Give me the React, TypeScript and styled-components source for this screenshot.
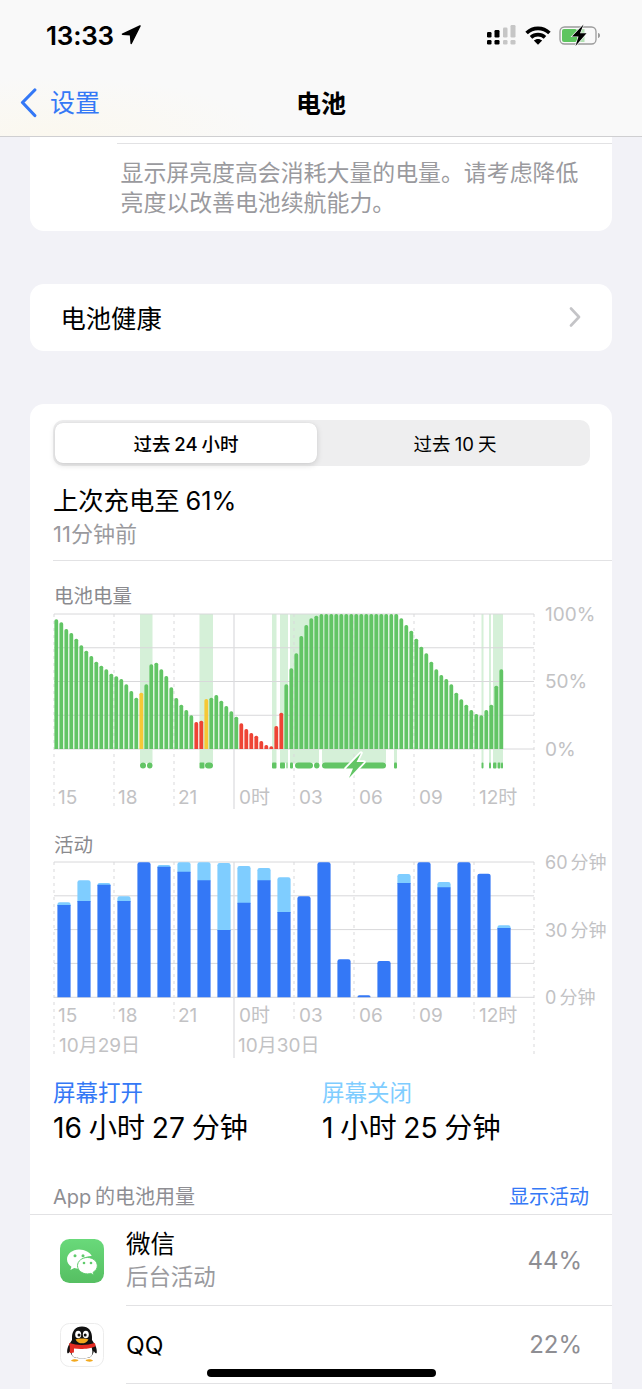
import React from "react";
import styled, { createGlobalStyle } from "styled-components";

const FONT = `Inter, "Noto Sans CJK SC", sans-serif`;

const Global = createGlobalStyle`
  html, body { margin: 0; padding: 0; background: #f2f2f7; }
  body { font-family: ${FONT}; -webkit-font-smoothing: antialiased; }
`;

const Page = styled.div`
  position: relative;
  width: 642px;
  height: 1389px;
  overflow: hidden;
  background: #f2f2f7;
`;
const Header = styled.header`
  height: 136px;
  border-bottom: 1px solid #cfcfd1;
  background: radial-gradient(220px 60px at 50px 136px, #fbf8ef, transparent), #f9f9f9;
`;
const StatusBar = styled.div`
  height: 70px;
  padding: 0 41px 0 46px;
  display: flex;
  align-items: center;
  justify-content: space-between;
`;
const Clock = styled.div`
  display: flex;
  align-items: center;
  gap: 7px;
  font-size: 26px;
  font-weight: 600;
  color: #000;
  letter-spacing: -0.2px;
`;
const StatusIcons = styled.div`
  display: flex;
  align-items: center;
  gap: 8px;
`;
const NavBar = styled.nav`
  position: relative;
  height: 66px;
  display: flex;
  align-items: center;
  justify-content: center;
`;
const BackLink = styled.div`
  position: absolute;
  left: 20px;
  top: 18px;
  display: flex;
  align-items: center;
  gap: 13px;
  font-size: 25px;
  line-height: 30px;
  color: #3478f6;
`;
const NavTitle = styled.div`
  margin-top: -2px;
  font-size: 25px;
  font-weight: 600;
  color: #000;
`;
const Card = styled.section<{ $mt?: number }>`
  display: flow-root;
  margin: ${(p) => p.$mt ?? 0}px 30px 0;
  background: #fff;
  border-radius: 14px;
`;
const TopCard = styled(Card)`
  height: 94px;
  border-radius: 0 0 14px 14px;
  padding-top: 6px;
  box-sizing: border-box;
`;
const NoteRule = styled.div`
  height: 1px;
  margin-left: 87px;
  background: #e2e2e4;
`;
const Note = styled.p`
  margin: 14px 24px 0 90.5px;
  font-size: 22.9px;
  line-height: 30px;
  color: #9a9a9e;
`;
const LinkRow = styled(Card)`
  height: 67px;
  padding: 0 31px 2px 30.5px;
  box-sizing: border-box;
  display: flex;
  align-items: center;
  justify-content: space-between;
  font-size: 25.3px;
  color: #000;
`;
const Segmented = styled.div`
  margin: 16px 22px 0 23px;
  height: 46px;
  box-sizing: border-box;
  padding: 3px 3px 3px 2px;
  display: flex;
  background: #eeeeef;
  border-radius: 10px;
`;
const Segment = styled.div<{ $on?: boolean }>`
  flex: ${(p) => (p.$on ? "0 0 262px" : "1")};
  padding-left: ${(p) => (p.$on ? 0 : 6)}px;
  display: flex;
  align-items: center;
  justify-content: center;
  border-radius: 8px;
  font-size: 18.5px;
  color: #000;
  word-spacing: -1px;
  font-weight: ${(p) => (p.$on ? 500 : 400)};
  background: ${(p) => (p.$on ? "#fff" : "transparent")};
  box-shadow: ${(p) => (p.$on ? "0 2px 6px rgba(0,0,0,.14), 0 0 1px rgba(0,0,0,.1)" : "none")};
`;
const Summary = styled.div`
  margin: 17px 0 0 23px;
  padding-bottom: 11px;
  border-bottom: 1px solid #e2e2e4;
`;
const SummaryTitle = styled.div`
  font-size: 25.3px;
  line-height: 36px;
  color: #000;
  word-spacing: -1px;
`;
const SummarySub = styled.div`
  font-size: 22px;
  line-height: 30px;
  color: #9a9a9e;
`;
const ChartTitle = styled.div<{ $mt: number }>`
  margin: ${(p) => p.$mt}px 0 0 24px;
  font-size: 19.5px;
  line-height: 24px;
  color: #8a8a8e;
`;
const ChartSvg = styled.svg`
  display: block;
  width: 582px;
  height: 205px;
  overflow: visible;
`;
const AxisText = styled.text<{ $small?: boolean }>`
  font-family: ${FONT};
  font-size: ${(p) => (p.$small ? 18 : 19)}px;
  fill: #c2c2c4;
  word-spacing: -2px;
`;
const Stats = styled.div`
  margin: 17px 23px 0;
  display: grid;
  grid-template-columns: 269px 1fr;
`;
const StatLabel = styled.div<{ $light?: boolean }>`
  font-size: 22.5px;
  line-height: 28px;
  color: ${(p) => (p.$light ? "#7fcdff" : "#3478f6")};
`;
const StatValue = styled.div`
  margin-top: 2px;
  font-size: 28.2px;
  line-height: 38px;
  color: #000;
  word-spacing: -1.2px;
`;
const UsageHead = styled.div`
  margin: 34px 23px 0;
  height: 28px;
  display: flex;
  align-items: center;
  justify-content: space-between;
  font-size: 20px;
  color: #8e8e93;
  word-spacing: -2px;
`;
const UsageLink = styled.span`
  color: #3478f6;
`;
const AppList = styled.div`
  margin-top: 5px;
  padding-bottom: 20px;
  border-top: 1px solid #e2e2e4;
`;
const AppRow = styled.div<{ $h: number }>`
  height: ${(p) => p.$h}px;
  display: flex;
  align-items: center;
  padding-left: 30px;
`;
const AppIcon = styled.svg`
  display: block;
  width: 44px;
  height: 44px;
  flex: none;
`;
const AppBody = styled.div`
  align-self: stretch;
  flex: 1;
  margin-left: 22px;
  padding-right: 30px;
  display: flex;
  align-items: center;
  justify-content: space-between;
  border-bottom: 1px solid #e2e2e4;
  box-sizing: border-box;
`;
const AppName = styled.div`
  font-size: 24.5px;
  line-height: 32px;
  color: #000;
`;
const AppSub = styled.div`
  font-size: 22.4px;
  line-height: 30px;
  margin-top: 2px;
  color: #9a9a9e;
`;
const AppPct = styled.div`
  font-size: 24px;
  color: #8e8e93;
`;
const HomeBar = styled.div`
  position: absolute;
  left: 207px;
  top: 1369px;
  width: 229px;
  height: 8px;
  border-radius: 4px;
  background: #000;
`;

const G = "#62c565", R = "#ee4435", Y = "#f6c836";
const batteryTops = [118,127,147,159,176,196,212,228,245,257,268,281,289,297,313,333,353,338,313,253,248,268,288,322,354,374,390,406,426,422,357,353,345,362,378,394,410,430,447,459,467,483,495,499,438,398,313,265,220,168,135,115,107,102,102,102,102,102,102,102,102,102,102,102,102,102,102,102,102,115,135,152,176,200,220,245,268,285,297,313,338,358,374,390,402,406,390,374,317,268];
const reds = new Set([28,29,37,38,39,40,41,42,43,44,45]);
const yellows = new Set([17,30]);
const regions: [number, number][] = [[140,152.5],[199.5,213],[272,276.5],[280,288],[290,319],[322,386],[394,397],[481.5,483.5],[489,491],[493,503]];
const strips: [number, number][] = [[140,146],[147,152.5],[199.5,204.5],[205,213],[272,276.5],[280,285],[286.5,287.5],[290,293],[295,313],[314,319.5],[322,386],[394,397],[481.5,483.5],[489,491],[493,496.5],[497.5,500.5],[501,503]];
const activity: [number, number][] = [[232,240],[166,228],[174,179],[214,228],[112,112],[120,125],[112,140],[112,166],[114,315],[123,233],[129,166],[157,261],[214,214],[112,112],[403,403],[511,511],[408,408],[147,174],[112,112],[171,187],[112,112],[146,146],[301,309]];
const ticks = [54,114,174,234,294,354,414,474,534];
const hourLabels: [number, string][] = [[58,"15"],[118,"18"],[178,"21"],[239,"0时"],[299,"03"],[359,"06"],[419,"09"],[479,"12时"]];

const topBar = (cx: number, w: number, top: number, bottom: number, r: number) => {
  const l = cx - w / 2, rr = cx + w / 2, rad = Math.min(r, Math.max(0, bottom - top));
  return `M${l} ${bottom}V${top + rad}Q${l} ${top} ${l + rad} ${top}H${rr - rad}Q${rr} ${top} ${rr} ${top + rad}V${bottom}Z`;
};

function Ticks({ top, bottom, extended }: { top: number; bottom: number; extended?: number }) {
  return (
    <>
      {ticks.map((x) =>
        x === 234 ? (
          <line key={x} x1={x} x2={x} y1={top} y2={(extended ?? bottom) + 3} stroke="#dedee0" strokeWidth={1.3} />
        ) : (
          <line key={x} x1={x} x2={x} y1={top} y2={extended && (x === 54 || x === 534) ? extended : bottom} stroke="#d9d9db" strokeWidth={1} strokeDasharray="3 4" />
        )
      )}
    </>
  );
}

function BatteryChart() {
  const toY = (z: number) => 580 + z / 3;
  return (
    <ChartSvg viewBox="30 608 582 205">
      {regions.map(([a, b]) => <rect key={a} x={a} y={614} width={b - a} height={149} fill="#d5f0d8" />)}
      {[614, 647.75, 681.5, 715.25, 749].map((y) => (
        <line key={y} x1={54} x2={534} y1={y} y2={y} stroke="#d8d8da" strokeWidth={1} />
      ))}
      <Ticks top={614} bottom={806} />
      {batteryTops.map((z, i) => (
        <path key={i} d={topBar(56.3 + 5 * i, 3.8, toY(z), 749, 1.7)} fill={reds.has(i) ? R : yellows.has(i) ? Y : G} />
      ))}
      {strips.map(([a, b]) => <rect key={a} x={a} y={762.5} width={b - a} height={6} rx={b - a > 5 ? 3 : 1} fill={G} />)}
      <path d="M361 753 346 768.500h7L349 778l15-16h-7.500L361 753z" fill={G} stroke="#fff" strokeWidth={3.5} strokeLinejoin="round" paintOrder="stroke" />
      {hourLabels.map(([x, t]) => <AxisText key={t} x={x} y={804}>{t}</AxisText>)}
      <AxisText x={545} y={621}>100%</AxisText>
      <AxisText x={545} y={688}>50%</AxisText>
      <AxisText x={545} y={756}>0%</AxisText>
    </ChartSvg>
  );
}

function ActivityChart() {
  const toY = (z: number) => 825 + z / 3;
  return (
    <ChartSvg viewBox="30 857 582 205">
      {[862, 895.8, 929.6, 963.4, 997.3].map((y) => (
        <line key={y} x1={54} x2={534} y1={y} y2={y} stroke="#d8d8da" strokeWidth={1} />
      ))}
      <Ticks top={862} bottom={1022} extended={1055} />
      {activity.map(([light, dark], i) => {
        const cx = 64 + 20 * i;
        return (
          <g key={i}>
            {light !== dark && <path d={topBar(cx, 13.2, toY(light), toY(dark) + 1, 2.2)} fill="#7fcdff" />}
            <path d={topBar(cx, 13.2, toY(dark), 997.3, light === dark ? 2.2 : 0.4)} fill="#3478f6" />
          </g>
        );
      })}
      {hourLabels.map(([x, t]) => <AxisText key={t} x={x} y={1022}>{t}</AxisText>)}
      <AxisText x={59} y={1052}>10月29日</AxisText>
      <AxisText x={238} y={1052}>10月30日</AxisText>
      <AxisText $small x={545} y={869}>60 分钟</AxisText>
      <AxisText $small x={545} y={937}>30 分钟</AxisText>
      <AxisText $small x={545} y={1004}>0 分钟</AxisText>
    </ChartSvg>
  );
}

const LocationArrow = () => (
  <svg width="20" height="20" viewBox="0 0 20 20">
    <path d="M19 1 1.500 9.200l8 .5.700 8.800L19 1z" fill="#000" stroke="#000" strokeWidth="1.500" strokeLinejoin="round" />
  </svg>
);
const CellDots = () => (
  <svg width="30" height="20" viewBox="0 0 30 20">
    <g fill="#000">
      <rect x="0" y="7" width="4.5" height="5.5" rx="1.2" />
      <rect x="7.5" y="5" width="5" height="7.5" rx="1.2" />
      <rect x="0" y="15" width="4.5" height="4.5" rx="1.2" />
      <rect x="7.5" y="15" width="5" height="4.5" rx="1.2" />
    </g>
    <g fill="#c6c6c6">
      <rect x="16" y="2.5" width="4.5" height="10" rx="1.2" />
      <rect x="23.5" y="0" width="5" height="12.5" rx="1.2" />
      <rect x="16" y="15" width="4.5" height="4.5" rx="1.2" />
      <rect x="23.5" y="15" width="5" height="4.5" rx="1.2" />
    </g>
  </svg>
);
const Wifi = () => (
  <svg width="26" height="19" viewBox="0 0 26 19">
    <path d="M1.6 7C8 .8 18 .8 24.400 7" fill="none" stroke="#000" strokeWidth="3.600" />
    <path d="M6 11.400c4-3.700 10-3.700 14 0" fill="none" stroke="#000" strokeWidth="3.600" />
    <path d="M13 18.800 8.800 14.600c2.400-2.100 6-2.100 8.400 0L13 18.800z" fill="#000" />
  </svg>
);
const BatteryIcon = () => (
  <svg width="42" height="22" viewBox="0 0 42 22">
    <rect x="1" y="3" width="36" height="17" rx="4.5" fill="none" stroke="#9b9b9b" strokeWidth="1.3" />
    <rect x="3" y="5" width="15" height="13" rx="2" fill="#5ec560" />
    <rect x="18" y="5" width="7.500" height="13" fill="#5ec560" opacity=".45" />
    <path d="M39 9c1.4.3 2 1.2 2 2.5S40.400 13.700 39 14z" fill="#9b9b9b" />
    <path d="M24.500.5 13 12.500h6.500l-3 9.500 11-12.700h-6.500L24.500.5z" fill="#000" stroke="#f9f9f9" strokeWidth="1.200" paintOrder="stroke" />
  </svg>
);
const BackChevron = () => (
  <svg width="17" height="30" viewBox="0 0 17 30">
    <path d="M14.800 2 2.500 14.500 14.800 27.500" fill="none" stroke="#3478f6" strokeWidth="3.200" strokeLinecap="round" strokeLinejoin="round" />
  </svg>
);
const RowChevron = () => (
  <svg width="12" height="20" viewBox="0 0 12 20">
    <path d="M2 1.500 10 10 2 18.500" fill="none" stroke="#c4c4c7" strokeWidth="2.600" strokeLinecap="round" strokeLinejoin="round" />
  </svg>
);
const WeChatIcon = () => (
  <AppIcon viewBox="0 0 44 44">
    <defs>
      <linearGradient id="wc" x1="0" y1="0" x2="0" y2="1">
        <stop offset="0" stopColor="#69d97a" />
        <stop offset="1" stopColor="#56bf62" />
      </linearGradient>
    </defs>
    <rect width="44" height="44" rx="9.500" fill="url(#wc)" />
    <path d="M19 10.500c-6.500 0-12 4.300-12 9.800 0 3.100 1.700 5.700 4.400 7.500l-1 3.300 3.800-2c1.500.5 3.100.8 4.800.8.500 0 .9 0 1.300-.1-.3-1-.5-2-.5-3 0-5.500 5-9.700 11.100-9.700h.8C30.300 13.500 25.100 10.500 19 10.500z" fill="#fff" />
    <path d="M37.300 26.700c0-4.600-4.500-8.200-9.900-8.200s-9.900 3.600-9.900 8.200 4.500 8.200 9.900 8.200c1.200 0 2.300-.2 3.400-.5l3.100 1.700-.8-2.800c2.500-1.500 4.200-3.800 4.200-6.400z" fill="#fff" stroke="#60cc6e" strokeWidth="1" />
    <g fill="#5fcb6c">
      <circle cx="15" cy="16.800" r="1.500" /><circle cx="23" cy="16.800" r="1.500" />
      <circle cx="24" cy="24" r="1.300" /><circle cx="31" cy="24" r="1.300" />
    </g>
  </AppIcon>
);
const QQIcon = () => (
  <AppIcon viewBox="0 0 44 44">
    <rect x=".5" y=".5" width="43" height="43" rx="9" fill="#fff" stroke="#ececec" />
    <path d="M22 3.500c-6.600 0-10 4.700-10 10.500v3c-2.600 3.700-5.500 8.300-4.700 13 .5 1 1.900-.2 2.900-2 .4 2.400 1.500 4.500 3.300 6 3 1.800 14.200 1.800 17 0 1.800-1.500 2.900-3.600 3.300-6 1 1.800 2.400 3 2.900 2 .8-4.700-2.100-9.300-4.700-13v-3C32 8.200 28.600 3.500 22 3.500z" fill="#111" />
    <path d="M13 23c-1.500 3.500-2 7-.5 10 2 3 17 3 19 0 1.500-3 1-6.500-.5-10-5 1.300-13 1.300-18 0z" fill="#fff" />
    <ellipse cx="18.200" cy="11.500" rx="3" ry="3.800" fill="#fff" />
    <ellipse cx="25.800" cy="11.500" rx="3" ry="3.800" fill="#fff" />
    <circle cx="19" cy="12" r="1.500" fill="#111" /><circle cx="25.200" cy="12" r="1.500" fill="#111" />
    <path d="M15.500 16.500c3-1.300 10-1.300 13 0-1.500 3-3.800 3.800-6.500 3.800s-5-.8-6.500-3.800z" fill="#f2a81d" />
    <path d="M9.500 20c7 2.500 18 2.500 25 0 .9.200 1.300 2.800.6 3.600-2.200 1-4.600 1.600-7.100 2 -4 .5-10 .6-14 0v.5l-.1 3.500c-1.200.5-3 .7-4 .3l-.2-7c-.7-.9-.6-2.300-.2-2.900z" fill="#e32b22" />
    <path d="M11 37.500c2-1.500 5-1.800 7.500-.5-.5 2-7 2.200-7.500.5zM33 37.500c-2-1.500-5-1.800-7.500-.5.500 2 7 2.200 7.500.5z" fill="#f2a81d" />
  </AppIcon>
);

export default function App() {
  return (
    <Page>
      <Global />
      <Header>
        <StatusBar>
          <Clock>13:33<LocationArrow /></Clock>
          <StatusIcons><CellDots /><Wifi /><BatteryIcon /></StatusIcons>
        </StatusBar>
        <NavBar>
          <BackLink><BackChevron /><span>设置</span></BackLink>
          <NavTitle>电池</NavTitle>
        </NavBar>
      </Header>
      <TopCard>
        <NoteRule />
        <Note>显示屏亮度高会消耗大量的电量。请考虑降低亮度以改善电池续航能力。</Note>
      </TopCard>
      <LinkRow $mt={53}><span>电池健康</span><RowChevron /></LinkRow>
      <Card $mt={53}>
        <Segmented>
          <Segment $on>过去 24 小时</Segment>
          <Segment>过去 10 天</Segment>
        </Segmented>
        <Summary>
          <SummaryTitle>上次充电至 61%</SummaryTitle>
          <SummarySub>11分钟前</SummarySub>
        </Summary>
        <ChartTitle $mt={23}>电池电量</ChartTitle>
        <BatteryChart />
        <ChartTitle $mt={20}>活动</ChartTitle>
        <ActivityChart />
        <Stats>
          <div>
            <StatLabel>屏幕打开</StatLabel>
            <StatValue>16 小时 27 分钟</StatValue>
          </div>
          <div>
            <StatLabel $light>屏幕关闭</StatLabel>
            <StatValue>1 小时 25 分钟</StatValue>
          </div>
        </Stats>
        <UsageHead><span>App 的电池用量</span><UsageLink>显示活动</UsageLink></UsageHead>
        <AppList>
          <AppRow $h={91}>
            <WeChatIcon />
            <AppBody>
              <div><AppName>微信</AppName><AppSub>后台活动</AppSub></div>
              <AppPct>44%</AppPct>
            </AppBody>
          </AppRow>
          <AppRow $h={78}>
            <QQIcon />
            <AppBody>
              <AppName>QQ</AppName>
              <AppPct>22%</AppPct>
            </AppBody>
          </AppRow>
        </AppList>
      </Card>
      <HomeBar />
    </Page>
  );
}
